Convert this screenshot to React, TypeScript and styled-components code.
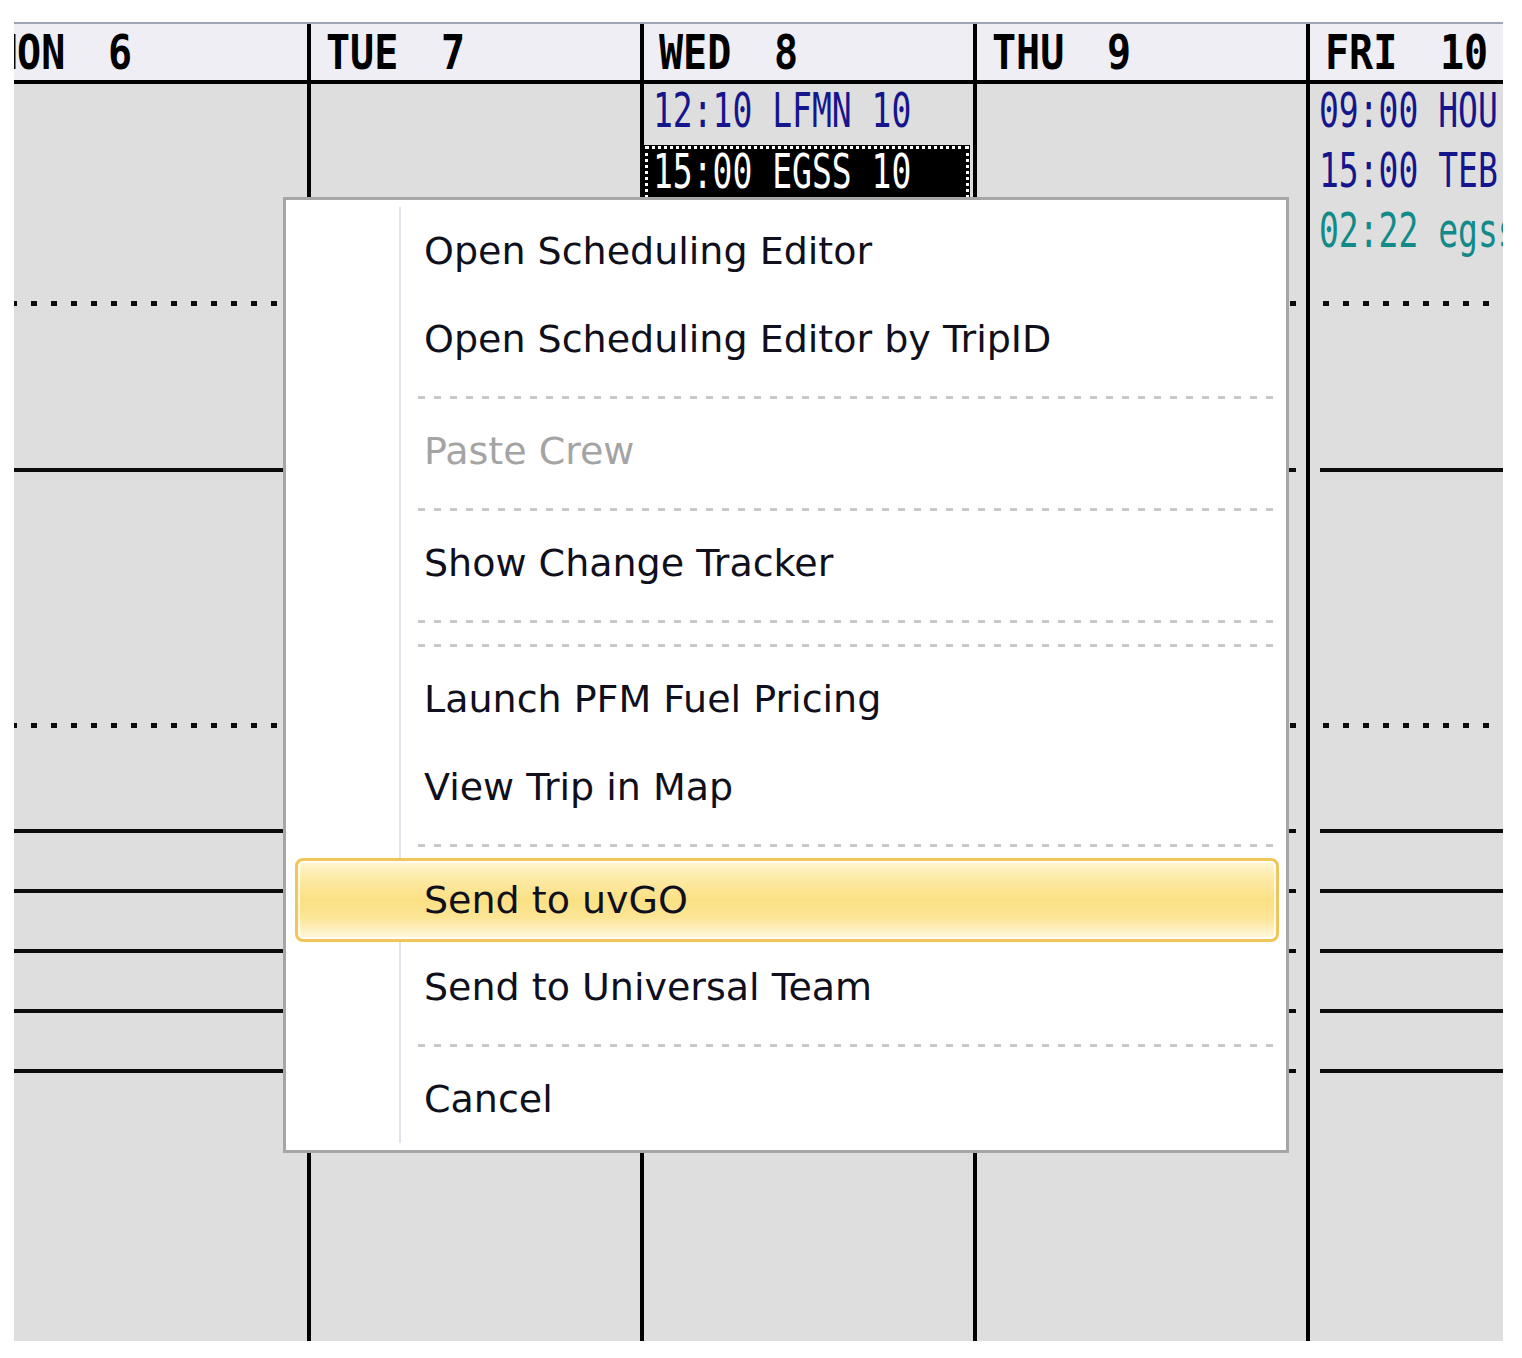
import React from 'react';
import styled, { createGlobalStyle, css } from 'styled-components';

const GlobalStyle = createGlobalStyle`
  html, body { margin: 0; padding: 0; background: #ffffff; }
  body { font-family: "DejaVu Sans", Verdana, sans-serif; }
`;

const Page = styled.div`
  width: 1522px;
  height: 1358px;
  box-sizing: border-box;
  padding: 22px 0 0 14px;
  background: #ffffff;
`;

const Viewport = styled.div`
  position: relative;
  width: 1489px;
  height: 1319px;
  box-sizing: border-box;
  border-top: 2px solid #9ea4b4;
  overflow: hidden;
`;

const Track = styled.div`
  display: flex;
  height: 100%;
  margin-left: -36px;
`;

const DayColumn = styled.div<{ $first?: boolean }>`
  flex: 0 0 auto;
  width: 329px;
  display: flex;
  flex-direction: column;
  ${(p) =>
    !p.$first &&
    css`
      border-left: 4px solid #000;
    `}
`;

const HeaderCell = styled.div`
  height: 56px;
  flex: 0 0 auto;
  background: #eeeef4;
  border-bottom: 4px solid #000;
  display: flex;
  align-items: center;
  padding-left: 15px;
  overflow: hidden;
`;

const HeaderLabel = styled.div`
  display: flex;
  font-family: "DejaVu Sans Mono", "Liberation Mono", monospace;
  font-weight: bold;
  font-size: 40px;
  line-height: 36px;
  color: #000;
  transform: scaleY(1.2);
  white-space: pre;
`;

const DayName = styled.span`
  width: 115px;
`;

const DayNum = styled.span``;

const DayBody = styled.div`
  flex: 1 1 auto;
  background: #dedede;
  display: flex;
  flex-direction: column;
  overflow: hidden;
`;

const EventList = styled.div`
  height: 217px;
  flex: 0 0 auto;
  overflow: hidden;
`;

type Tone = 'navy' | 'teal';

const EventRow = styled.div<{ $tone: Tone; $selected?: boolean }>`
  height: 60px;
  box-sizing: border-box;
  padding: 0 0 6px 9px;
  display: flex;
  align-items: center;
  white-space: pre;
  font-family: "DejaVu Sans Mono", "Liberation Mono", monospace;
  font-size: 33px;
  color: ${(p) => (p.$tone === 'teal' ? '#128a8a' : '#16168c')};
  ${(p) =>
    p.$selected &&
    css`
      background: #000;
      color: #fff;
      margin-top: 1px;
      margin-right: 3px;
      outline: 3px dotted #ffffff;
      outline-offset: -4px;
    `}
`;

const EventText = styled.span`
  display: inline-block;
  line-height: 30px;
  transform: scaleY(1.45);
`;

const Rule = styled.div<{ $kind: 'solid' | 'dotted'; $gap: number }>`
  flex: 0 0 auto;
  margin: ${(p) => p.$gap}px 10px 0 10px;
  ${(p) =>
    p.$kind === 'solid'
      ? css`
          height: 4px;
          background: #0c0c0c;
        `
      : css`
          height: 5px;
          background-image: repeating-linear-gradient(
            90deg,
            #0c0c0c 0 6px,
            transparent 6px 20px
          );
          background-position: 3px 0;
        `}
`;

const Menu = styled.div`
  position: absolute;
  left: 269px;
  top: 173px;
  width: 1006px;
  box-sizing: border-box;
  border: 3px solid #a6a6a8;
  background: #ffffff;
  padding: 7px 0;
`;

const MenuList = styled.div`
  display: flex;
  flex-direction: column;
  background-image: linear-gradient(#e2e3ea, #e2e3ea);
  background-repeat: no-repeat;
  background-position: 113px 0;
  background-size: 2px 100%;
`;

const MenuItem = styled.div<{ $disabled?: boolean; $active?: boolean }>`
  height: 88px;
  box-sizing: border-box;
  margin: 0 7px 0 9px;
  padding-left: 126px;
  border: 3px solid transparent;
  border-radius: 8px;
  display: flex;
  align-items: center;
  font-family: "DejaVu Sans", Verdana, sans-serif;
  font-size: 38px;
  color: ${(p) => (p.$disabled ? '#a4a4a4' : '#10101c')};
  white-space: nowrap;
  ${(p) =>
    p.$active &&
    css`
      height: 84px;
      margin-top: 3px;
      margin-bottom: 1px;
      border-color: #efc65a;
      background: linear-gradient(
        180deg,
        #fff6d6 0%,
        #fdeaa6 22%,
        #fbe084 50%,
        #fce594 72%,
        #fff8e2 100%
      );
      box-shadow: inset 0 0 0 2px rgba(255, 255, 255, 0.75);
    `}
`;

const Separator = styled.div`
  height: 24px;
  margin: 0 10px 0 132px;
  background-image: repeating-linear-gradient(
    90deg,
    #c8c8c8 0 7px,
    transparent 7px 16px
  );
  background-repeat: no-repeat;
  background-size: 100% 3px;
  background-position: 0 13px;
`;

type Ev = { text: string; tone: Tone; selected?: boolean };
type Day = { name: string; num: string; events: Ev[] };

const days: Day[] = [
  { name: 'MON', num: '6', events: [] },
  { name: 'TUE', num: '7', events: [] },
  {
    name: 'WED',
    num: '8',
    events: [
      { text: '12:10 LFMN 10', tone: 'navy' },
      { text: '15:00 EGSS 10', tone: 'navy', selected: true },
    ],
  },
  { name: 'THU', num: '9', events: [] },
  {
    name: 'FRI',
    num: '10',
    events: [
      { text: '09:00 HOU 10', tone: 'navy' },
      { text: '15:00 TEB 10', tone: 'navy' },
      { text: '02:22 egss', tone: 'teal' },
    ],
  },
];

const rules: { kind: 'solid' | 'dotted'; gap: number }[] = [
  { kind: 'dotted', gap: 0 },
  { kind: 'solid', gap: 162 },
  { kind: 'dotted', gap: 251 },
  { kind: 'solid', gap: 101 },
  { kind: 'solid', gap: 56 },
  { kind: 'solid', gap: 56 },
  { kind: 'solid', gap: 56 },
  { kind: 'solid', gap: 56 },
];

type Entry =
  | { type: 'item'; label: string; disabled?: boolean; active?: boolean }
  | { type: 'sep' };

const menu: Entry[] = [
  { type: 'item', label: 'Open Scheduling Editor' },
  { type: 'item', label: 'Open Scheduling Editor by TripID' },
  { type: 'sep' },
  { type: 'item', label: 'Paste Crew', disabled: true },
  { type: 'sep' },
  { type: 'item', label: 'Show Change Tracker' },
  { type: 'sep' },
  { type: 'sep' },
  { type: 'item', label: 'Launch PFM Fuel Pricing' },
  { type: 'item', label: 'View Trip in Map' },
  { type: 'sep' },
  { type: 'item', label: 'Send to uvGO', active: true },
  { type: 'item', label: 'Send to Universal Team' },
  { type: 'sep' },
  { type: 'item', label: 'Cancel' },
];

export default function App() {
  return (
    <>
      <GlobalStyle />
      <Page>
        <Viewport>
          <Track>
            {days.map((d, i) => (
              <DayColumn key={d.name} $first={i === 0}>
                <HeaderCell>
                  <HeaderLabel>
                    <DayName>{d.name}</DayName>
                    <DayNum>{d.num}</DayNum>
                  </HeaderLabel>
                </HeaderCell>
                <DayBody>
                  <EventList>
                    {d.events.map((e) => (
                      <EventRow key={e.text} $tone={e.tone} $selected={e.selected}>
                        <EventText>{e.text}</EventText>
                      </EventRow>
                    ))}
                  </EventList>
                  {rules.map((r, k) => (
                    <Rule key={k} $kind={r.kind} $gap={r.gap} />
                  ))}
                </DayBody>
              </DayColumn>
            ))}
          </Track>
          <Menu>
            <MenuList>
              {menu.map((m, k) =>
                m.type === 'sep' ? (
                  <Separator key={k} />
                ) : (
                  <MenuItem key={k} $disabled={m.disabled} $active={m.active}>
                    {m.label}
                  </MenuItem>
                )
              )}
            </MenuList>
          </Menu>
        </Viewport>
      </Page>
    </>
  );
}
